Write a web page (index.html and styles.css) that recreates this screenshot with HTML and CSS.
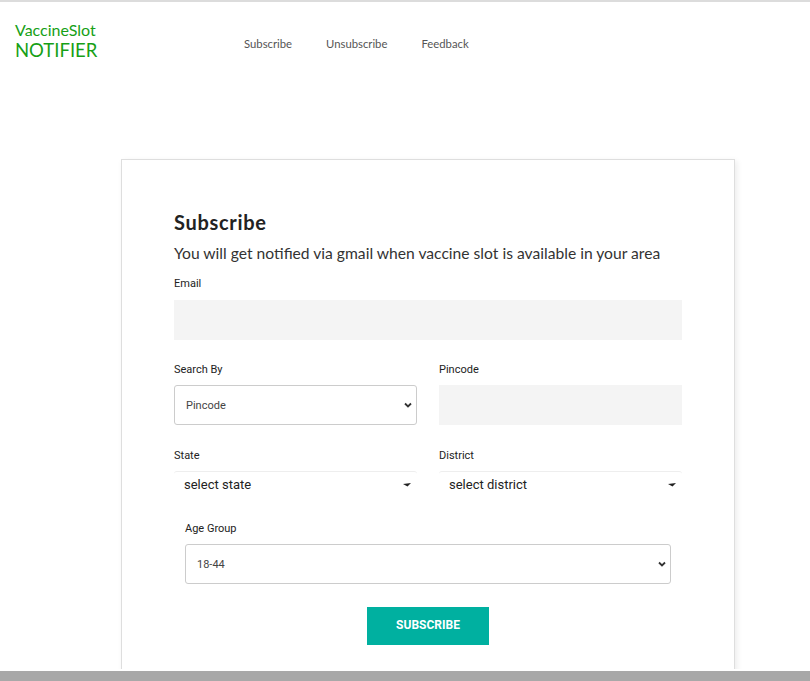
FILE: index.html
```html
<!DOCTYPE html>
<html>
<head>
<meta charset="utf-8">
<link rel="stylesheet" href="styles.css">
</head>
<body>
<div class="topline"></div>
<header class="header">
  <div class="brand">
    <div class="brand-top">VaccineSlot</div>
    <div class="brand-bottom">NOTIFIER</div>
  </div>
  <nav class="nav">
    <a class="nav-link">Subscribe</a>
    <a class="nav-link">Unsubscribe</a>
    <a class="nav-link">Feedback</a>
  </nav>
</header>
<main class="main">
  <section class="card">
    <h1 class="title">Subscribe</h1>
    <p class="subtitle">You will get notified via gmail when vaccine slot is available in your area</p>
    <div class="field email">
      <label class="label">Email</label>
      <div class="input"></div>
    </div>
    <div class="row">
      <div class="field">
        <label class="label">Search By</label>
        <div class="select"><span>Pincode</span><svg class="chev" width="8" height="6" viewBox="0 0 8 6"><path d="M1 1.5 L4 4.5 L7 1.5" fill="none" stroke="#333" stroke-width="1.8"/></svg></div>
      </div>
      <div class="field">
        <label class="label">Pincode</label>
        <div class="input"></div>
      </div>
    </div>
    <div class="row row-2">
      <div class="field">
        <label class="label">State</label>
        <div class="plain-select"><span>select state</span><svg class="caret" width="8" height="4" viewBox="0 0 8 4"><path d="M0 1 L8 0 L4.5 3.5 Z" fill="#222"/></svg></div>
      </div>
      <div class="field">
        <label class="label">District</label>
        <div class="plain-select"><span>select district</span><svg class="caret" width="8" height="4" viewBox="0 0 8 4"><path d="M0 1 L8 0 L4.5 3.5 Z" fill="#222"/></svg></div>
      </div>
    </div>
    <div class="field age">
      <label class="label">Age Group</label>
      <div class="select"><span>18-44</span><svg class="chev" width="8" height="6" viewBox="0 0 8 6"><path d="M1 1.5 L4 4.5 L7 1.5" fill="none" stroke="#333" stroke-width="1.8"/></svg></div>
    </div>
    <div class="actions">
      <button class="btn">SUBSCRIBE</button>
    </div>
  </section>
</main>
<div class="bottombar"></div>
</body>
</html>
```
FILE: styles.css
```css
* { box-sizing: border-box; }
html, body { margin: 0; padding: 0; background: #fff; overflow: hidden; }
body { height: 681px; font-family: "Lato", "Open Sans", sans-serif; }
.topline { height: 2px; background: #dcdcdc; }
.header { display: flex; align-items: flex-start; padding: 19px 0 0 15px; height: 100px; }
.brand { width: 229px; color: #16a016; }
.brand-top { font-size: 16px; line-height: 18px; }
.brand-bottom { font-size: 18.5px; line-height: 22px; }
.nav { display: flex; gap: 34px; padding-top: 16px; }
.nav-link { font-size: 11.3px; color: #555; line-height: 14px; }
.main { padding: 57px 0 0 121px; }
.card { width: 614px; height: 560px; border: 1px solid #dedede; box-shadow: 2px 2px 6px rgba(0,0,0,0.08); padding: 50px 52px 0 52px; }
.title { margin: 0; font-size: 20px; letter-spacing: 0.7px; font-weight: 700; color: #222; line-height: 24px; }
.subtitle { margin: 9px 0 0; font-size: 15.65px; color: #333; line-height: 20px; }
.label { display: block; font-family: Roboto, sans-serif; font-size: 11px; color: #222; line-height: 14px; margin-bottom: 8px; }
.field.email { margin-top: 14px; }
.email .label { margin-bottom: 9px; }
.input { height: 40px; background: #f4f4f4; }
.row { display: grid; grid-template-columns: 243px 243px; column-gap: 22px; margin-top: 23px; }
.row-2 { margin-top: 24px; }
.select { height: 40px; border: 1px solid #ccc; border-radius: 3px; display: flex; align-items: center; justify-content: space-between; padding: 0 4px 0 11px; font-family: Roboto, sans-serif; font-size: 11px; color: #444; }
.plain-select { height: 26px; border-top: 1px solid #eee; border-radius: 3px; display: flex; align-items: center; justify-content: space-between; padding: 0 6px 0 10px; font-family: Roboto, sans-serif; font-size: 13px; color: #222; }
.age { margin: 25px 11px 0; }
.actions { display: flex; justify-content: center; margin-top: 23px; }
.btn { width: 122px; height: 38px; padding: 0 0 2px; border: 0; background: #00b0a0; color: #fff; font-family: Roboto, sans-serif; font-weight: 700; font-size: 12px; }
.bottombar { position: fixed; left: 0; right: 0; bottom: 0; height: 12px; border-top: 2px solid #fff; background: #a8a8a8; }
```
